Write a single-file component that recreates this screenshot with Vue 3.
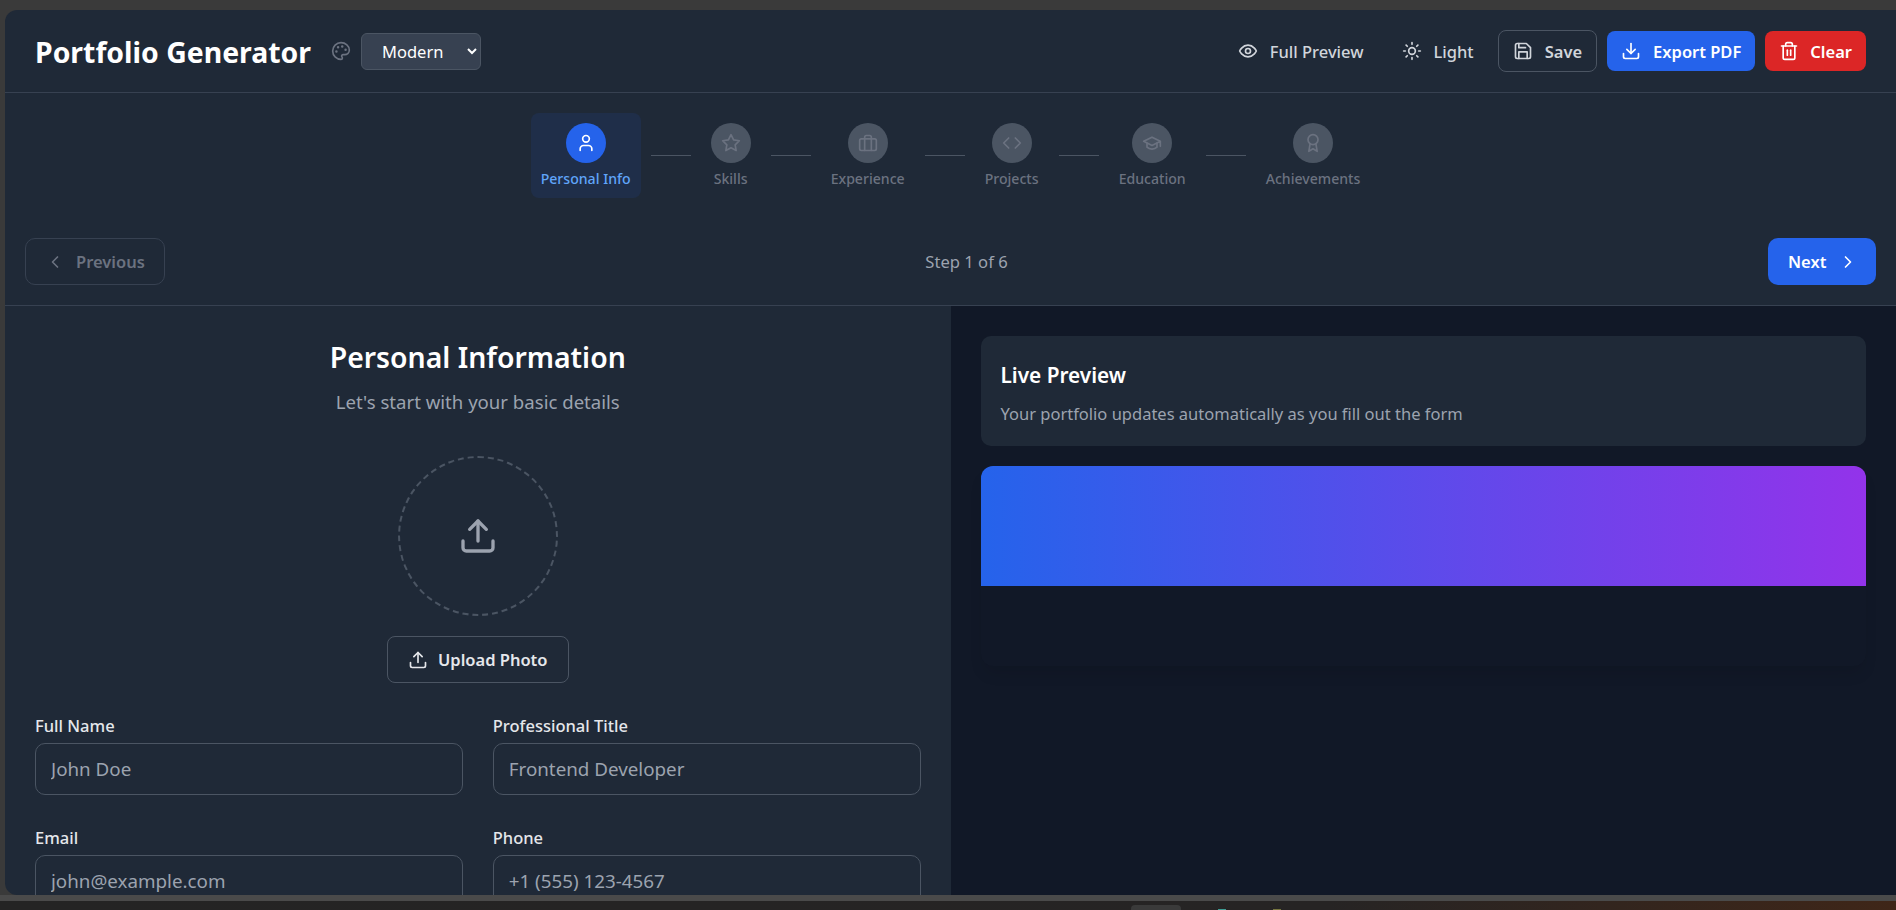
<script setup>
import { h } from 'vue'

const dot = (cx, cy, r) => `M${cx - r} ${cy}a${r} ${r} 0 1 0 ${2 * r} 0a${r} ${r} 0 1 0 ${-2 * r} 0`

const paths = {
  palette: [dot(13.5, 6.5, 0.5), dot(17.5, 10.5, 0.5), dot(8.5, 7.5, 0.5), dot(6.5, 12.5, 0.5), 'M12 2C6.5 2 2 6.5 2 12s4.5 10 10 10c.926 0 1.648-.746 1.648-1.688 0-.437-.18-.835-.437-1.125-.29-.289-.438-.652-.438-1.125a1.64 1.64 0 0 1 1.668-1.668h1.996c3.051 0 5.555-2.503 5.555-5.554C21.965 6.012 17.461 2 12 2z'],
  eye: ['M2 12s3-7 10-7 10 7 10 7-3 7-10 7-10-7-10-7Z', dot(12, 12, 3)],
  sun: [dot(12, 12, 4), 'M12 2v2', 'M12 20v2', 'm4.93 4.93 1.41 1.41', 'm17.66 17.66 1.41 1.41', 'M2 12h2', 'M20 12h2', 'm6.34 17.66-1.41 1.41', 'm19.07 4.93-1.41 1.41'],
  save: ['M19 21H5a2 2 0 0 1-2-2V5a2 2 0 0 1 2-2h11l5 5v11a2 2 0 0 1-2 2z', 'M17 21v-8H7v8', 'M7 3v5h8'],
  download: ['M21 15v4a2 2 0 0 1-2 2H5a2 2 0 0 1-2-2v-4', 'M7 10l5 5 5-5', 'M12 15V3'],
  upload: ['M21 15v4a2 2 0 0 1-2 2H5a2 2 0 0 1-2-2v-4', 'M17 8l-5-5-5 5', 'M12 3v12'],
  trash: ['M3 6h18', 'M19 6v14c0 1-1 2-2 2H7c-1 0-2-1-2-2V6', 'M8 6V4c0-1 1-2 2-2h4c1 0 2 1 2 2v2', 'M10 11v6', 'M14 11v6'],
  user: ['M19 21v-2a4 4 0 0 0-4-4H9a4 4 0 0 0-4 4v2', dot(12, 7, 4)],
  star: ['M12 2l3.09 6.26L22 9.27l-5 4.87 1.18 6.88L12 17.77l-6.18 3.25L7 14.14 2 9.27l6.91-1.01L12 2z'],
  briefcase: ['M4 7h16a2 2 0 0 1 2 2v10a2 2 0 0 1-2 2H4a2 2 0 0 1-2-2V9a2 2 0 0 1 2-2z', 'M16 21V5a2 2 0 0 0-2-2h-4a2 2 0 0 0-2 2v16'],
  code: ['m16 18 6-6-6-6', 'm8 6-6 6 6 6'],
  cap: ['M22 10v6M2 10l10-5 10 5-10 5z', 'M6 12v5c3 3 9 3 12 0v-5'],
  award: [dot(12, 8, 6), 'M15.477 12.89 17 22l-5-3-5 3 1.523-9.11'],
  left: ['m15 18-6-6 6-6'],
  right: ['m9 18 6-6-6-6'],
}

const Icon = (props) => h('svg', {
  width: props.size || 20,
  height: props.size || 20,
  viewBox: '0 0 24 24',
  fill: 'none',
  stroke: 'currentColor',
  'stroke-width': 2,
  'stroke-linecap': 'round',
  'stroke-linejoin': 'round',
  style: { flex: 'none' },
}, paths[props.name].map((d) => h('path', { d })))
Icon.props = ['name', 'size']

const steps = [
  { label: 'Personal Info', icon: 'user' },
  { label: 'Skills', icon: 'star' },
  { label: 'Experience', icon: 'briefcase' },
  { label: 'Projects', icon: 'code' },
  { label: 'Education', icon: 'cap' },
  { label: 'Achievements', icon: 'award' },
]

const fields = [
  { label: 'Full Name', placeholder: 'John Doe' },
  { label: 'Professional Title', placeholder: 'Frontend Developer' },
  { label: 'Email', placeholder: 'john@example.com' },
  { label: 'Phone', placeholder: '+1 (555) 123-4567' },
]
</script>

<template>
  <div class="desktop">
    <div class="window">
      <header class="topbar">
        <div class="brand">
          <h1>Portfolio Generator</h1>
          <Icon name="palette" class="palette" />
          <select class="theme">
            <option>Modern</option>
          </select>
        </div>
        <div class="actions">
          <button class="btn ghost"><Icon name="eye" />Full Preview</button>
          <button class="btn ghost"><Icon name="sun" />Light</button>
          <button class="btn outline"><Icon name="save" />Save</button>
          <button class="btn blue"><Icon name="download" />Export PDF</button>
          <button class="btn red"><Icon name="trash" />Clear</button>
        </div>
      </header>

      <section class="wizard">
        <div class="steps">
          <template v-for="(step, i) in steps" :key="step.label">
            <div class="step" :class="{ active: i === 0 }">
              <span class="circle"><Icon :name="step.icon" /></span>
              <span class="step-label">{{ step.label }}</span>
            </div>
            <span v-if="i < steps.length - 1" class="line"></span>
          </template>
        </div>
        <div class="pager">
          <button class="nav prev" disabled><Icon name="left" />Previous</button>
          <span class="count">Step 1 of 6</span>
          <button class="nav next">Next<Icon name="right" /></button>
        </div>
      </section>

      <main class="split">
        <section class="form">
          <h2>Personal Information</h2>
          <p class="sub">Let's start with your basic details</p>
          <div class="photo"><Icon name="upload" :size="40" /></div>
          <button class="upload"><Icon name="upload" />Upload Photo</button>
          <div class="grid">
            <label v-for="f in fields" :key="f.label" class="field">
              <span>{{ f.label }}</span>
              <input type="text" :placeholder="f.placeholder" />
            </label>
          </div>
        </section>
        <aside class="preview">
          <div class="info">
            <h3>Live Preview</h3>
            <p>Your portfolio updates automatically as you fill out the form</p>
          </div>
          <div class="sheet">
            <div class="banner"></div>
          </div>
        </aside>
      </main>
    </div>
    <div class="edge"></div>
    <div class="taskbar">
      <span class="task"></span>
      <span class="tray teal"></span>
      <span class="tray olive"></span>
    </div>
  </div>
</template>

<style>
html, body {
  margin: 0;
  background: #3a3a3a;
}
</style>

<style scoped>
* {
  box-sizing: border-box;
}

.desktop {
  height: 910px;
  width: 1896px;
  overflow: hidden;
  display: flex;
  flex-direction: column;
  padding-top: 10px;
  background: #3a3a3a;
  font-family: "Noto Sans", "Open Sans", sans-serif;
  color: #e5e7eb;
}

.window {
  height: 885px;
  margin-left: 5px;
  overflow: hidden;
  display: flex;
  flex-direction: column;
  background: #1f2937;
  border-radius: 12px 0 0 12px;
}

.edge {
  height: 6px;
  background: #4a4a4a;
}

.taskbar {
  height: 9px;
  position: relative;
  background: linear-gradient(90deg, #242424 0%, #262424 70%, #3f2618 100%);
}

.task {
  position: absolute;
  left: 1131px;
  top: 4px;
  width: 50px;
  height: 8px;
  border-radius: 4px 4px 0 0;
  background: #3a3a3a;
}

.tray {
  position: absolute;
  top: 8px;
  width: 8px;
  height: 2px;
}

.teal {
  left: 1218px;
  background: #3f9d94;
}

.olive {
  left: 1273px;
  background: #77763f;
}

.topbar {
  height: 83px;
  flex: none;
  display: flex;
  align-items: center;
  justify-content: space-between;
  padding: 0 30px;
  border-bottom: 1px solid #374151;
}

.brand {
  display: flex;
  align-items: center;
}

h1 {
  margin: 0 20px 0 0;
  padding-top: 2px;
  font-size: 28.4px;
  font-weight: 700;
  color: #fff;
}

.palette {
  color: #6b7280;
  margin-right: 10px;
}

.theme {
  width: 120px;
  height: 37px;
  padding: 0 16px;
  background: #374151;
  border: 1px solid #4b5563;
  border-radius: 6px;
  color: #fff;
  font-family: inherit;
  font-size: 16.5px;
}

.actions {
  display: flex;
  align-items: center;
  gap: 10px;
}

.btn {
  height: 40px;
  display: flex;
  align-items: center;
  gap: 12px;
  padding: 0 14px;
  border: 0;
  border-radius: 8px;
  background: none;
  color: #fff;
  font-family: inherit;
  font-size: 16.5px;
  font-weight: 600;
}

.ghost {
  color: #d1d5db;
  font-weight: 500;
}

.outline {
  height: 42px;
  color: #d1d5db;
  border: 1px solid #4b5563;
}

.blue {
  background: #2563eb;
}

.red {
  gap: 11px;
  background: #dc2626;
}

.wizard {
  flex: none;
  padding: 20px 20px 20px;
  border-bottom: 1px solid #374151;
}

.steps {
  display: flex;
  align-items: center;
  justify-content: center;
  gap: 10px;
  margin-bottom: 40px;
}

.step {
  height: 85px;
  display: flex;
  flex-direction: column;
  align-items: center;
  padding: 10px 10px 0;
  border-radius: 8px;
}

.step.active {
  background: rgba(37, 99, 235, 0.1);
}

.circle {
  width: 40px;
  height: 40px;
  display: flex;
  align-items: center;
  justify-content: center;
  border-radius: 50%;
  background: #4b5563;
  color: #6b7280;
}

.active .circle {
  background: #2563eb;
  color: #fff;
}

.step-label {
  margin-top: 6px;
  font-size: 14.1px;
  font-weight: 500;
  line-height: 20px;
  color: #6b7280;
  white-space: nowrap;
}

.active .step-label {
  color: #60a5fa;
}

.line {
  width: 40px;
  height: 1px;
  background: #4b5563;
}

.pager {
  display: flex;
  align-items: center;
  justify-content: space-between;
}

.nav {
  height: 47px;
  display: flex;
  align-items: center;
  gap: 12px;
  border-radius: 10px;
  font-family: inherit;
  font-size: 16.5px;
  font-weight: 600;
}

.prev {
  width: 140px;
  padding: 0 0 0 19px;
  gap: 11px;
  background: none;
  border: 1px solid #374151;
  color: #6b7280;
}

.next {
  width: 108px;
  padding: 0 0 0 20px;
  background: #2563eb;
  border: 0;
  color: #fff;
}

.count {
  font-size: 16.6px;
  color: #9ca3af;
}

.split {
  flex: 1;
  min-height: 0;
  display: flex;
}

.form {
  flex: 1;
  min-width: 0;
  padding: 30px 30px 0;
  display: flex;
  flex-direction: column;
  align-items: center;
}

h2 {
  margin: 0;
  font-size: 28.4px;
  line-height: 42px;
  font-weight: 600;
  color: #fff;
}

.sub {
  margin: 10px 0 0;
  font-size: 18.6px;
  line-height: 28px;
  color: #9ca3af;
}

.photo {
  width: 160px;
  height: 160px;
  flex: none;
  margin-top: 40px;
  display: flex;
  align-items: center;
  justify-content: center;
  border: 2px dashed #4b5563;
  border-radius: 50%;
  color: #9ca3af;
}

.upload {
  width: 182px;
  height: 47px;
  flex: none;
  margin-top: 20px;
  display: flex;
  align-items: center;
  justify-content: center;
  gap: 10px;
  background: none;
  border: 1px solid #4b5563;
  border-radius: 8px;
  color: #e5e7eb;
  font-family: inherit;
  font-size: 16.5px;
  font-weight: 600;
}

.grid {
  width: 100%;
  flex: none;
  margin-top: 31px;
  display: grid;
  grid-template-columns: 1fr 1fr;
  gap: 31px 30px;
}

.field {
  display: flex;
  flex-direction: column;
  gap: 5px;
}

.field span {
  font-size: 16.5px;
  line-height: 24px;
  font-weight: 500;
  color: #e5e7eb;
}

.field input {
  height: 52px;
  padding: 0 15px;
  background: #1f2937;
  border: 1px solid #4b5563;
  border-radius: 10px;
  font-family: inherit;
  font-size: 18.8px;
  color: #fff;
}

.field input::placeholder {
  color: #9ca3af;
  opacity: 1;
}

.preview {
  flex: 1;
  min-width: 0;
  padding: 30px;
  background: #111827;
}

.info {
  height: 110px;
  padding: 24px 20px 0;
  background: #1f2937;
  border-radius: 10px;
}

h3 {
  margin: 0;
  font-size: 20.8px;
  line-height: 30px;
  font-weight: 600;
  color: #fff;
}

.info p {
  margin: 12px 0 0;
  font-size: 16.5px;
  line-height: 24px;
  color: #9ca3af;
}

.sheet {
  height: 200px;
  margin-top: 20px;
  overflow: hidden;
  background: #111827;
  border-radius: 12px;
  box-shadow: 0 10px 15px -3px rgba(0, 0, 0, 0.1);
}

.banner {
  height: 120px;
  background: linear-gradient(90deg, #2563eb, #9333ea);
}
</style>
